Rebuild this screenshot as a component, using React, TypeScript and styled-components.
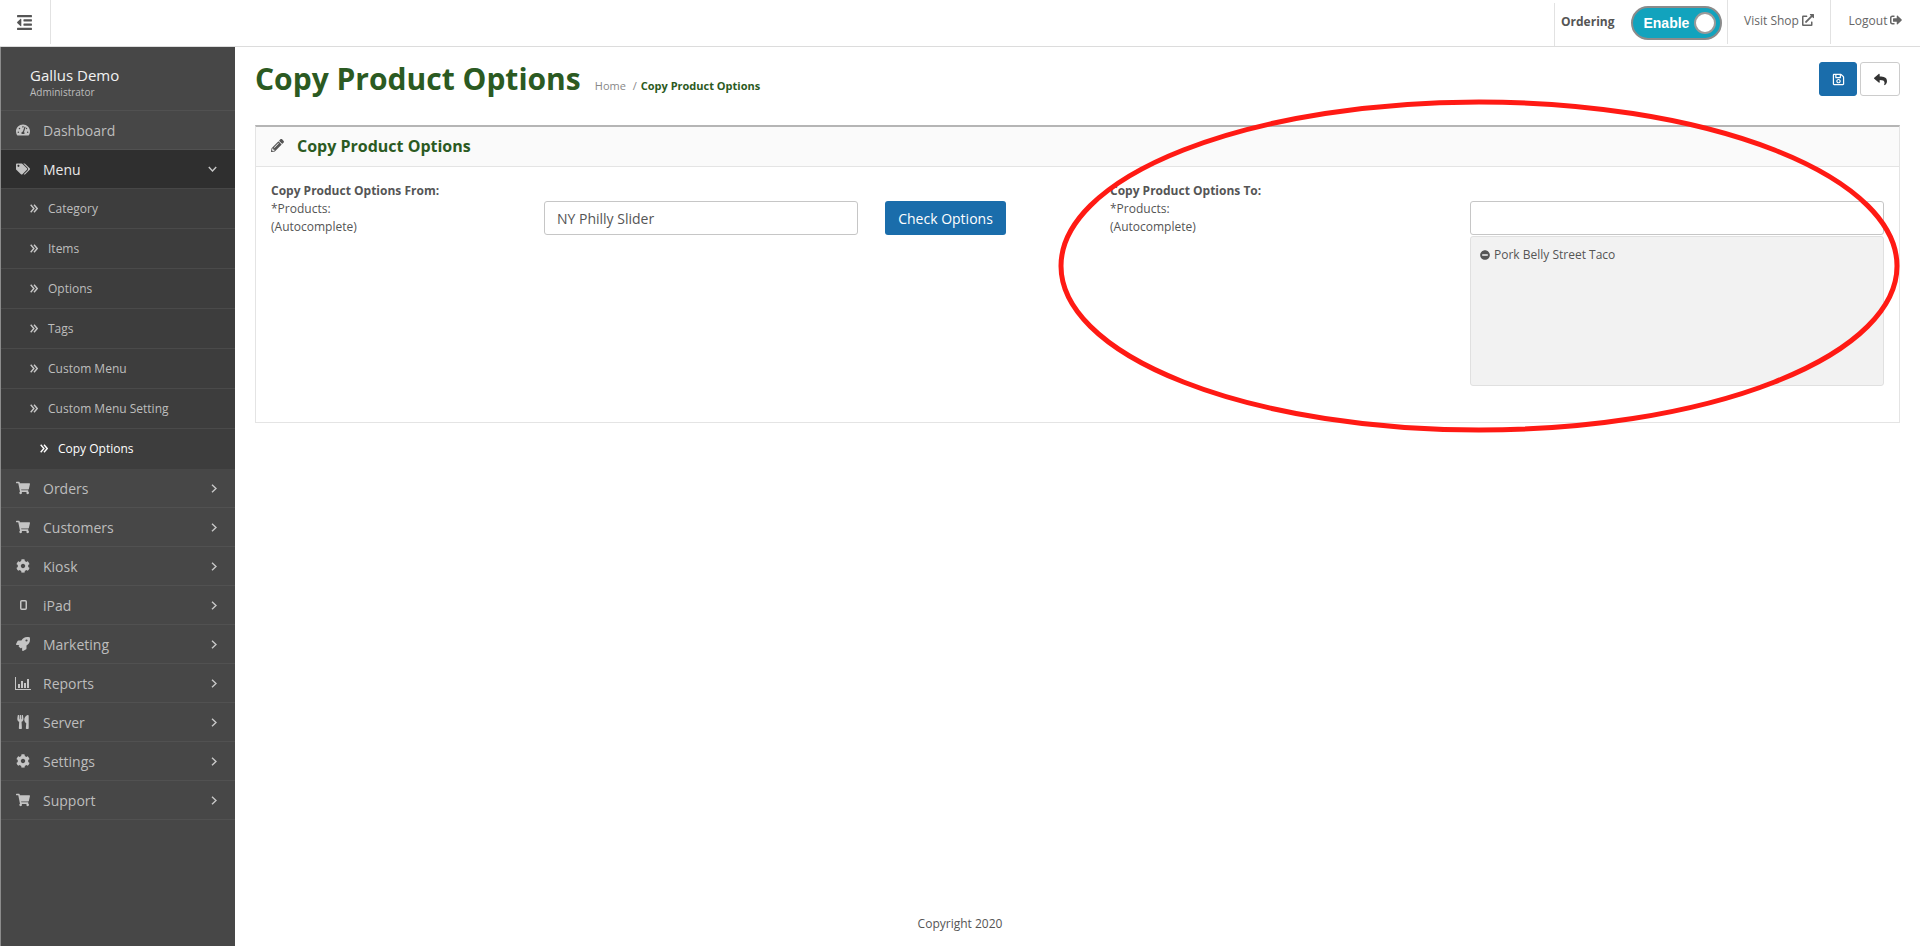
import React from 'react';
import styled, { createGlobalStyle } from 'styled-components';
import {
  FaOutdent, FaTachometerAlt, FaTags, FaShoppingCart,
  FaCog, FaRocket, FaUtensils, FaPencilAlt, FaRegSave, FaReply, FaExternalLinkAlt, FaSignOutAlt, FaMinusCircle,
} from 'react-icons/fa';

const Global = createGlobalStyle`
  html, body { margin: 0; padding: 0; height: 100%; background: #fff; }
  body { font-family: "Open Sans", "Liberation Sans", sans-serif; font-size: 12px; color: #555; }
  * { box-sizing: border-box; }
`;

const Page = styled.div`
  position: relative;
  width: 1920px;
  height: 946px;
  display: flex;
  flex-direction: column;
  overflow: hidden;
`;

const Header = styled.header`
  height: 47px;
  flex: none;
  display: flex;
  justify-content: space-between;
  border-bottom: 1px solid #dcdcdc;
`;
const MenuToggle = styled.div`
  width: 51px;
  height: 44px;
  display: flex;
  align-items: center;
  justify-content: center;
  padding-right: 1px;
  border-right: 1px solid #e2e2e2;
  color: #555;
  font-size: 17px;
`;
const HeaderRight = styled.div`
  display: flex;
  align-items: stretch;
`;
const HeaderCell = styled.div<{ $w: number }>`
  width: ${p => p.$w}px;
  height: 44px;
  padding-bottom: 4px;
  display: flex;
  align-items: center;
  justify-content: center;
  gap: 3px;
  border-left: 1px solid #e2e2e2;
  color: #666;
  font-size: 12px;
  svg { font-size: 12px; }
`;
const OrderingCell = styled(HeaderCell)`
  justify-content: flex-start;
  padding-left: 6px;
  padding-bottom: 3px;
  gap: 17px;
  margin-top: 3px;
  height: 43px;
`;
const OrderingLabel = styled.span`
  font-weight: 700;
  color: #555;
  font-size: 12px;
  margin-top: -3px;
`;
const Switch = styled.div`
  width: 91px;
  height: 34px;
  border-radius: 17px;
  background: #12a3bd;
  border: 2px solid #8b8b8b;
  display: flex;
  align-items: center;
  justify-content: space-between;
  padding: 0 4px 0 10px;
  color: #fff;
  font: 700 14px "Liberation Sans", Arial, sans-serif;
`;
const Knob = styled.span`
  width: 22px;
  height: 22px;
  border-radius: 50%;
  background: #fff;
  border: 2px solid #9a9a9a;
`;

const Body = styled.div`
  flex: 1;
  display: flex;
  min-height: 0;
`;
const Sidebar = styled.aside`
  width: 235px;
  flex: none;
  background: #474747;
  border-left: 1px solid #8c8c8c;
`;
const Profile = styled.div`
  height: 64px;
  padding: 18px 0 0 29px;
  border-bottom: 1px solid #515151;
`;
const ProfileName = styled.div`
  color: #f2f2f2;
  font-size: 15px;
  line-height: 20px;
`;
const ProfileRole = styled.div`
  color: #bdbdbd;
  font-size: 10px;
  line-height: 14px;
`;
const NavItem = styled.div<{ $active?: boolean; $h?: number }>`
  height: ${p => p.$h ?? 39}px;
  display: flex;
  align-items: center;
  padding: 0 18px 0 14px;
  border-bottom: 1px solid ${p => (p.$active ? '#474747' : '#515151')};
  background: ${p => (p.$active ? '#2f2f2f' : 'transparent')};
  color: ${p => (p.$active ? '#e8e8e8' : '#bdbdbd')};
  font-size: 14px;
`;
const NavIcon = styled.span`
  width: 16px;
  display: flex;
  justify-content: center;
  margin-right: 12px;
  font-size: 14px;
  color: #c4c4c4;
`;
const NavLabel = styled.span`
  flex: 1;
`;
const Chevron = styled.svg`
  flex: none;
  fill: none;
  stroke: #c8c8c8;
  stroke-width: 1.4;
`;
const SubList = styled.div`
  background: #3d3d3d;
`;
const SubItem = styled.div<{ $current?: boolean }>`
  height: 40px;
  display: flex;
  align-items: center;
  gap: 10px;
  padding-left: ${p => (p.$current ? 39 : 29)}px;
  border-bottom: 1px solid ${p => (p.$current ? '#3d3d3d' : '#4a4a4a')};
  color: ${p => (p.$current ? '#fff' : '#bdbdbd')};
  font-size: 12px;
  svg { color: ${p => (p.$current ? '#fff' : '#c8c8c8')}; }
`;

const Main = styled.main`
  flex: 1;
  min-width: 0;
  display: flex;
  flex-direction: column;
  padding: 0 20px 0 20px;
`;
const PageHead = styled.div`
  height: 78px;
  display: flex;
  align-items: flex-start;
  justify-content: space-between;
`;
const TitleGroup = styled.div`
  display: flex;
  align-items: baseline;
  gap: 14px;
  padding-top: 11px;
`;
const Title = styled.h1`
  margin: 0;
  font-size: 30px;
  line-height: 42px;
  font-weight: 700;
  color: #2b5a22;
`;
const Crumbs = styled.div`
  font-size: 11px;
  color: #888;
  display: flex;
  gap: 4px;
`;
const CrumbCurrent = styled.span`
  font-weight: 700;
  color: #2b5a22;
`;
const Actions = styled.div`
  display: flex;
  gap: 3px;
  padding-top: 15px;
`;
const IconBtn = styled.div<{ $primary?: boolean }>`
  width: ${p => (p.$primary ? 38 : 40)}px;
  height: 34px;
  display: flex;
  align-items: center;
  justify-content: center;
  border-radius: 3px;
  font-size: 13px;
  background: ${p => (p.$primary ? '#1a6dab' : '#fff')};
  color: ${p => (p.$primary ? '#fff' : '#333')};
  border: 1px solid ${p => (p.$primary ? '#1a6dab' : '#ccc')};
`;
const Panel = styled.section`
  height: 298px;
  border: 1px solid #e4e4e4;
  border-top: 2px solid #b5b5b5;
`;
const PanelHead = styled.div`
  height: 40px;
  display: flex;
  align-items: center;
  gap: 13px;
  padding: 0 0 2px 15px;
  background: #fafafa;
  border-bottom: 1px solid #e4e4e4;
  svg { font-size: 13px; color: #555; }
`;
const PanelTitle = styled.h3`
  margin: 0;
  font-size: 16px;
  font-weight: 700;
  color: #2b5a22;
`;
const FormGrid = styled.div`
  display: grid;
  grid-template-columns: 273px 314px 252px 360px 414px;
  padding: 15px 0 0 15px;
  align-items: start;
`;
const LabelBlock = styled.div`
  line-height: 18px;
  font-size: 12px;
  color: #555;
`;
const LabelStrong = styled.div`
  font-weight: 700;
`;
const FieldCol = styled.div`
  padding-top: 19px;
  display: flex;
  flex-direction: column;
  gap: 1px;
`;
const Input = styled.input`
  width: 100%;
  height: 34px;
  border: 1px solid #c6c6c6;
  border-radius: 3px;
  padding: 0 12px;
  font: 14px "Open Sans", sans-serif;
  color: #555;
  background: #fff;
  outline: none;
`;
const CheckBtn = styled.div`
  width: 121px;
  height: 34px;
  margin-left: 27px;
  display: flex;
  align-items: center;
  justify-content: center;
  border-radius: 3px;
  background: #1a6dab;
  color: #fff;
  font-size: 14px;
`;
const Well = styled.div`
  height: 150px;
  background: #f2f2f2;
  border: 1px solid #e0e0e0;
  border-radius: 3px;
  padding: 9px 9px;
`;
const WellItem = styled.div`
  display: flex;
  align-items: center;
  gap: 4px;
  line-height: 18px;
  font-size: 12px;
  color: #555;
  svg { font-size: 10px; }
`;
const Footer = styled.footer`
  margin-top: auto;
  padding: 0 235px 13px 0;
  text-align: center;
  font-size: 12px;
  line-height: 18px;
  color: #555;
`;
const Annotation = styled.svg`
  position: absolute;
  left: 0;
  top: 0;
  pointer-events: none;
`;

const ChevronRight = () => (
  <Chevron width="6" height="9" viewBox="0 0 6 9"><path d="M1 .8 5 4.5 1 8.2" /></Chevron>
);
const ChevronDown = () => (
  <Chevron width="9" height="6" viewBox="0 0 9 6"><path d="M.8 1 4.5 5 8.2 1" /></Chevron>
);
const DoubleRight = () => (
  <svg width="8" height="9" viewBox="0 0 8 9" fill="none" stroke="currentColor" strokeWidth="1.4"><path d="M.7.8 3.9 4.5.7 8.2M4 .8 7.2 4.5 4 8.2" /></svg>
);
const CartIcon = () => <FaShoppingCart />;
const TabletIcon = () => (
  <svg width="7" height="10" viewBox="0 0 7 10"><rect x=".75" y=".75" width="5.5" height="8.5" rx="1" fill="none" stroke="currentColor" strokeWidth="1.5" /></svg>
);
const ChartIcon = () => (
  <svg width="16" height="13" viewBox="0 0 16 13" fill="currentColor">
    <path d="M0 0h1v12h15v1H0z" /><rect x="3" y="7" width="2" height="4" /><rect x="6" y="4" width="2" height="7" /><rect x="9" y="6" width="2" height="5" /><rect x="12" y="2" width="2" height="9" />
  </svg>
);

const subs = ['Category', 'Items', 'Options', 'Tags', 'Custom Menu', 'Custom Menu Setting'];
const mains: [string, React.ReactNode][] = [
  ['Orders', <CartIcon />],
  ['Customers', <CartIcon />],
  ['Kiosk', <FaCog />],
  ['iPad', <TabletIcon />],
  ['Marketing', <FaRocket />],
  ['Reports', <ChartIcon />],
  ['Server', <FaUtensils />],
  ['Settings', <FaCog />],
  ['Support', <CartIcon />],
];

export default function App() {
  return (
    <Page>
      <Global />
      <Header>
        <MenuToggle><FaOutdent /></MenuToggle>
        <HeaderRight>
          <OrderingCell $w={173}>
            <OrderingLabel>Ordering</OrderingLabel>
            <Switch>Enable<Knob /></Switch>
          </OrderingCell>
          <HeaderCell $w={103}>Visit Shop <FaExternalLinkAlt /></HeaderCell>
          <HeaderCell $w={90}>Logout <FaSignOutAlt /></HeaderCell>
        </HeaderRight>
      </Header>
      <Body>
        <Sidebar>
          <Profile>
            <ProfileName>Gallus Demo</ProfileName>
            <ProfileRole>Administrator</ProfileRole>
          </Profile>
          <NavItem>
            <NavIcon><FaTachometerAlt /></NavIcon>
            <NavLabel>Dashboard</NavLabel>
          </NavItem>
          <NavItem $active>
            <NavIcon><FaTags /></NavIcon>
            <NavLabel>Menu</NavLabel>
            <ChevronDown />
          </NavItem>
          <SubList>
            {subs.map(s => (
              <SubItem key={s}><DoubleRight />{s}</SubItem>
            ))}
            <SubItem $current><DoubleRight />Copy Options</SubItem>
          </SubList>
          {mains.map(([label, icon]) => (
            <NavItem key={label}>
              <NavIcon>{icon}</NavIcon>
              <NavLabel>{label}</NavLabel>
              <ChevronRight />
            </NavItem>
          ))}
        </Sidebar>
        <Main>
          <PageHead>
            <TitleGroup>
              <Title>Copy Product Options</Title>
              <Crumbs>
                <span>Home</span><span>&nbsp;/</span><CrumbCurrent>Copy Product Options</CrumbCurrent>
              </Crumbs>
            </TitleGroup>
            <Actions>
              <IconBtn $primary><FaRegSave /></IconBtn>
              <IconBtn><FaReply /></IconBtn>
            </Actions>
          </PageHead>
          <Panel>
            <PanelHead>
              <FaPencilAlt />
              <PanelTitle>Copy Product Options</PanelTitle>
            </PanelHead>
            <FormGrid>
              <LabelBlock>
                <LabelStrong>Copy Product Options From:</LabelStrong>
                *Products:<br />(Autocomplete)
              </LabelBlock>
              <FieldCol><Input defaultValue="NY Philly Slider" /></FieldCol>
              <FieldCol><CheckBtn>Check Options</CheckBtn></FieldCol>
              <LabelBlock>
                <LabelStrong>Copy Product Options To:</LabelStrong>
                *Products:<br />(Autocomplete)
              </LabelBlock>
              <FieldCol>
                <Input />
                <Well>
                  <WellItem><FaMinusCircle />Pork Belly Street Taco</WellItem>
                </Well>
              </FieldCol>
            </FormGrid>
          </Panel>
          <Footer>Copyright 2020</Footer>
        </Main>
      </Body>
      <Annotation width="1920" height="946" viewBox="0 0 1920 946">
        <ellipse cx="1479" cy="266" rx="418" ry="164" fill="none" stroke="#ff1a14" strokeWidth="5" />
      </Annotation>
    </Page>
  );
}
